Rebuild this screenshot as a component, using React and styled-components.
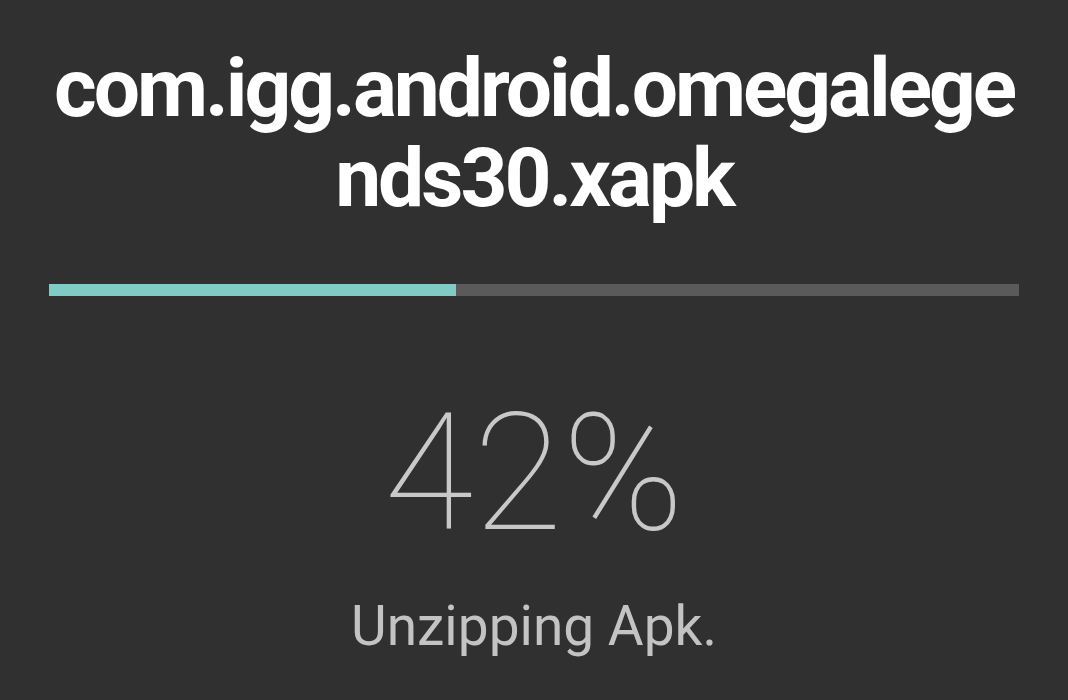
import React from "react";
import styled, { createGlobalStyle } from "styled-components";

const Global = createGlobalStyle`
  html, body {
    margin: 0;
    padding: 0;
    background: #303031;
  }
  body {
    font-family: Roboto, "Noto Sans", "Liberation Sans", sans-serif;
    -webkit-font-smoothing: antialiased;
  }
`;

const Screen = styled.div`
  width: 1068px;
  height: 700px;
  overflow: hidden;
  background: #303031;
  display: flex;
  flex-direction: column;
  align-items: stretch;
  padding: 43px 49px 0;
  box-sizing: border-box;
`;

const Title = styled.h1`
  margin: 0;
  font-family: Roboto, "Liberation Sans", sans-serif;
  font-weight: 700;
  font-size: 82px;
  line-height: 90px;
  letter-spacing: -3px;
  color: #ffffff;
  text-align: center;
  word-break: break-all;
`;

const Track = styled.div`
  margin-top: 61px;
  height: 12px;
  background: #5a5a5b;
  display: flex;
`;

const Fill = styled.div`
  height: 100%;
  background: #80cbc4;
`;

const Percent = styled.div`
  margin-top: 96px;
  font-family: Roboto, "Liberation Sans", sans-serif;
  font-weight: 100;
  font-size: 163px;
  line-height: 163px;
  color: #c8c8c8;
  text-align: center;
`;

const Status = styled.div`
  margin-top: 44px;
  font-family: Roboto, "Liberation Sans", sans-serif;
  font-weight: 400;
  font-size: 55px;
  line-height: 55px;
  color: #c3c3c4;
  text-align: center;
`;

export default function App() {
  const progress = 42;
  return (
    <>
      <Global />
      <Screen>
        <Title>com.igg.android.omegalegends30.xapk</Title>
        <Track>
          <Fill style={{ width: `${progress}%` }} />
        </Track>
        <Percent>{progress}%</Percent>
        <Status>Unzipping Apk.</Status>
      </Screen>
    </>
  );
}
